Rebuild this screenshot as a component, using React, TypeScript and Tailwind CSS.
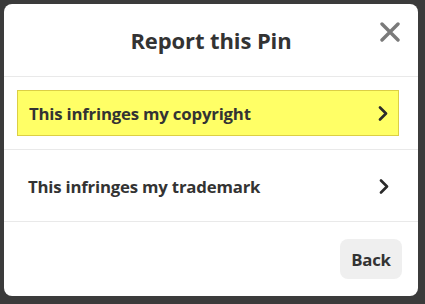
import { useState } from "react";

const font = { fontFamily: '"Open Sans", "Noto Sans", sans-serif' };

function Chevron() {
  return (
    <svg width="10" height="15" viewBox="0 0 10 15" className="shrink-0">
      <path d="M2 1.5 L8 7.5 L2 13.5" fill="none" stroke="#2b2b2b" strokeWidth="2.6" strokeLinecap="round" strokeLinejoin="round" />
    </svg>
  );
}

export default function App() {
  const [active] = useState("copyright");
  const items = [
    { id: "copyright", label: "This infringes my copyright" },
    { id: "trademark", label: "This infringes my trademark" },
  ];

  return (
    <div className="w-[425px] h-[304px] bg-[#3b3b3b] p-[4px] pr-[7px] pb-[8px]" style={font}>
      <div className="h-[292px] bg-white rounded-[8px] flex flex-col text-[#333333]">
        <div className="relative h-[73px] flex items-center justify-center border-b border-[#e9e9e9]">
          <h1 className="text-[22px] font-bold tracking-[-0.1px]">Report this Pin</h1>
          <button className="absolute right-[18px] top-[18px] w-[20px] h-[20px] flex items-center justify-center">
            <svg width="20" height="20" viewBox="0 0 20 20">
              <path d="M2 2 L18 18 M18 2 L2 18" stroke="#7a7a7a" strokeWidth="3.4" strokeLinecap="round" />
            </svg>
          </button>
        </div>

        {items.map(item => (
          <div key={item.id} className="h-[72.5px] border-b border-[#e9e9e9] pl-[13px] pr-[19px] flex items-center">
            <div
              className={`w-full h-[46px] flex items-center justify-between pl-[11px] pr-[10px] pt-[2px] ${
                active === item.id ? "bg-[#ffff66] border border-[#dccf45]" : ""
              }`}
            >
              <span className="text-[16.8px] font-bold tracking-[-0.2px]">{item.label}</span>
              <Chevron />
            </div>
          </div>
        ))}

        <div className="flex-1 flex items-center justify-end pr-[16px]">
          <button className="w-[62px] h-[40px] rounded-[8px] bg-[#efefef] text-[16.8px] font-bold tracking-[-0.2px] pt-[1px]">
            Back
          </button>
        </div>
      </div>
    </div>
  );
}
